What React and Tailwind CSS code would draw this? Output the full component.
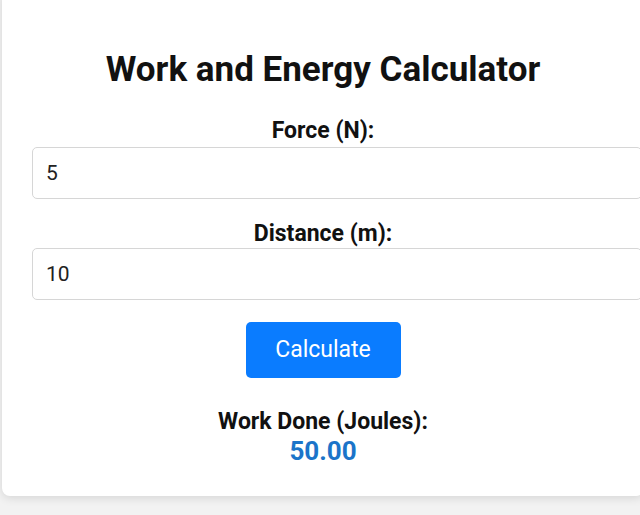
import { useState } from 'react';

export default function App() {
  const [force, setForce] = useState('5');
  const [distance, setDistance] = useState('10');
  const [work, setWork] = useState('50.00');

  const calculate = () => {
    const f = parseFloat(force);
    const d = parseFloat(distance);
    if (!isNaN(f) && !isNaN(d)) setWork((f * d).toFixed(2));
  };

  return (
    <div className="min-h-[515px] w-[640px] overflow-hidden bg-[#f2f2f2] font-['Roboto',sans-serif]">
      <div className="ml-[2px] -mt-[10px] w-[642px] rounded-lg bg-white px-[30px] pt-[60px] pb-[30px] shadow-[0_2px_10px_rgba(0,0,0,0.12)] text-center">
        <h1 className="text-[35px] leading-[40px] font-bold text-[#111]">Work and Energy Calculator</h1>

        <label className="mt-[27px] mb-[3px] block text-[23px] leading-[27px] font-bold text-[#111]">Force (N):</label>
        <input
          type="number"
          value={force}
          onChange={e => setForce(e.target.value)}
          className="box-content block w-full h-[24px] py-[13px] px-[13px] border border-[#d6d6d6] rounded-[5px] text-left text-[21px] leading-[24px] text-[#222] outline-none"
        />

        <label className="mt-[21px] mb-[1px] block text-[23px] leading-[27px] font-bold text-[#111]">Distance (m):</label>
        <input
          type="number"
          value={distance}
          onChange={e => setDistance(e.target.value)}
          className="box-content block w-full h-[24px] py-[13px] px-[13px] border border-[#d6d6d6] rounded-[5px] text-left text-[21px] leading-[24px] text-[#222] outline-none"
        />

        <button
          onClick={calculate}
          className="mt-[22px] h-[56px] w-[155px] rounded-[5px] bg-[#0a7cff] text-[23px] leading-[26px] text-white"
        >
          Calculate
        </button>

        <div className="mt-[30px] text-[23px] leading-[27px] font-bold text-[#111]">Work Done (Joules):</div>
        <div className="mt-[1px] text-[26px] leading-[30px] font-bold text-[#1b74c9]">{work}</div>
      </div>
    </div>
  );
}
